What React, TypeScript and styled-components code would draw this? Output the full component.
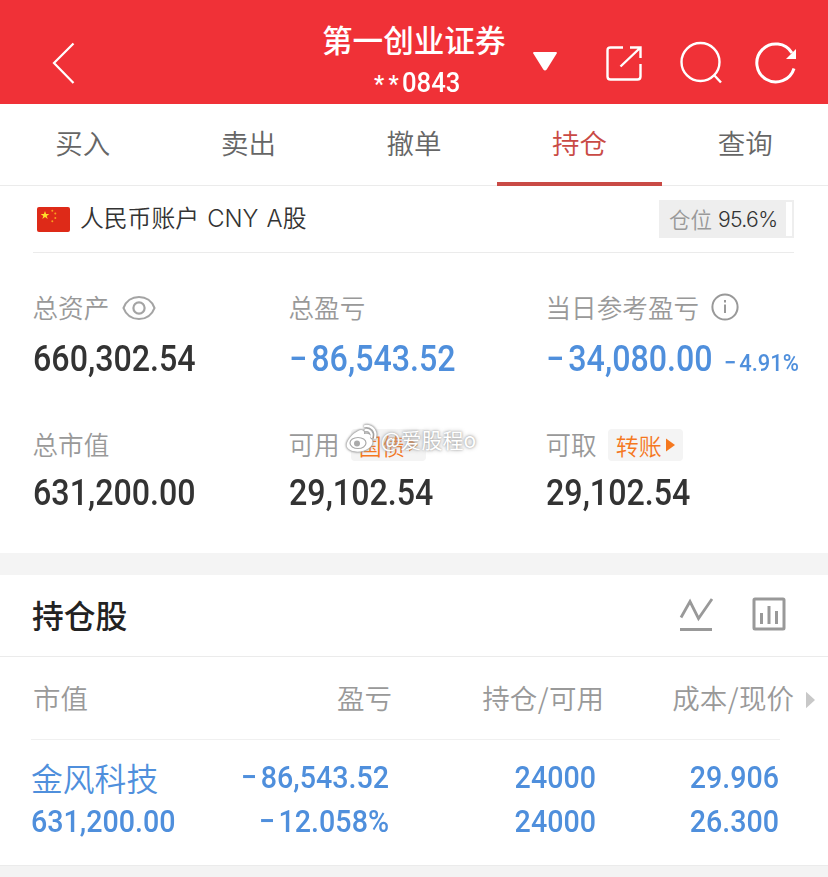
import React from "react";
import styled, { createGlobalStyle } from "styled-components";

const cjk = '"Noto Sans CJK SC", "Noto Sans", sans-serif';
const latin = 'Roboto, "Noto Sans CJK SC", sans-serif';
const blue = "#4f8fdc";
const orange = "#f5781f";

const Global = createGlobalStyle`
  * { box-sizing: border-box; }
  body { margin: 0; background: #fff; font-family: ${cjk}; }
`;

const Screen = styled.div`
  width: 828px;
  height: 877px;
  overflow: hidden;
  display: flex;
  flex-direction: column;
  background: #fff;
`;

const Header = styled.header`
  height: 104px;
  flex: none;
  display: grid;
  grid-template-columns: 322px 184px 1fr;
  background: #f03137;
  color: #fff;
`;
const HeaderLeft = styled.div`
  padding: 42px 0 0 51px;
`;
const HeaderTitle = styled.div`
  display: flex;
  flex-direction: column;
  padding-top: 18px;
  white-space: nowrap;
`;
const Broker = styled.h1`
  margin: 0;
  font-size: 30.6px;
  line-height: 42px;
  font-weight: 500;
`;
const AccountNo = styled.div`
  display: flex;
  align-items: center;
  margin: 5px 0 0 52px;
  font: 500 27px/34px ${latin};
`;
const Digits = styled.span`
  display: inline-block;
  transform: scaleX(0.95);
  transform-origin: 0 50%;
`;
const Mask = styled.span`
  width: 28px;
  font-size: 23px;
  letter-spacing: 4.4px;
  line-height: 30px;
  padding-top: 5px;
`;
const HeaderActions = styled.div`
  display: flex;
  padding: 40px 0 0 25px;
  svg { flex: none; display: block; }
`;

const Tabs = styled.nav`
  height: 82px;
  flex: none;
  display: grid;
  grid-template-columns: repeat(5, 1fr);
  border-bottom: 1px solid #ebebeb;
`;
const Tab = styled.div<{ $active?: boolean }>`
  height: 82px;
  text-align: center;
  font-size: 27.5px;
  line-height: 77px;
  font-weight: 350;
  color: ${(p) => (p.$active ? "#c94a45" : "#666")};
  border-bottom: 4px solid ${(p) => (p.$active ? "#c94a45" : "transparent")};
`;

const Account = styled.section`
  height: 67px;
  flex: none;
  margin: 0 34px 0 33px;
  border-bottom: 1px solid #ebebeb;
  display: flex;
  align-items: center;
  padding-left: 4px;
`;
const AccountName = styled.div`
  margin: 0 auto 0 10px;
  font: 350 23.8px/36px Inter, ${cjk};
  word-spacing: 1.5px;
  color: #333;
  white-space: nowrap;
`;
const Position = styled.div`
  width: 135px;
  height: 38px;
  margin-bottom: 1px;
  display: flex;
  border: 2px solid #eee;
  border-left: 0;
`;
const PositionFill = styled.div`
  width: 127px;
  background: #eee;
  padding-left: 10px;
  display: flex;
  gap: 6px;
  font-size: 21.5px;
  line-height: 33px;
  font-weight: 350;
  color: #999;
  white-space: nowrap;
  b { font: 350 21.2px/35px Inter, sans-serif; letter-spacing: -0.7px; color: #333; }
`;

const Summary = styled.section`
  height: 300px;
  flex: none;
  padding: 35px 0 0 32.500px;
  display: grid;
  grid-template-columns: 256px 257px 1fr;
  grid-template-rows: 137px 1fr;
`;
const Stat = styled.div`
  white-space: nowrap;
`;
const Label = styled.div`
  height: 38px;
  display: flex;
  align-items: center;
  font-size: 25.6px;
  line-height: 36px;
  font-weight: 350;
  color: #999;
`;
const IconGap = styled.span<{ $x: number; $y?: number }>`
  display: flex;
  margin: ${(p) => p.$y ?? 0}px 0 0 ${(p) => p.$x}px;
`;
const Values = styled.div<{ $lower?: boolean }>`
  display: flex;
  align-items: baseline;
  margin-top: ${(p) => (p.$lower ? 8 : 11)}px;
`;
const Num = styled.span<{ $size: number; $w: number; $blue?: boolean }>`
  display: block;
  width: ${(p) => p.$w}px;
  font: 500 ${(p) => p.$size}px/44px ${latin};
  color: ${(p) => (p.$blue ? blue : "#333")};
  transform: scaleX(0.895);
  transform-origin: 0 50%;
  white-space: nowrap;
`;
const Minus = styled.span`
  margin-right: 0.13em;
`;
const Chip = styled.span`
  position: relative;
  width: 75px;
  height: 32px;
  margin-left: 11px;
  margin-top: 1px;
  padding-left: 8px;
  border-radius: 4px;
  background: #f4f4f4;
  color: ${orange};
  font-size: 23px;
  line-height: 30px;
  font-weight: 350;
  display: flex;
  align-items: center;
  gap: 4px;
`;
const Watermark = styled.span`
  position: absolute;
  left: -6px;
  top: -6px;
  display: flex;
  align-items: center;
  gap: 2px;
  color: #fff;
  font-size: 21px;
  line-height: 32px;
  font-weight: 400;
  text-shadow: 0 0 2px #999, 0 0 4px #aaa;
  svg { filter: drop-shadow(0 0 1px #888) drop-shadow(0 0 1px #aaa); }
`;

const Divider = styled.div`
  height: 22px;
  flex: none;
  background: #f4f4f4;
`;
const Holdings = styled.section`
  flex: none;
  height: 290px;
`;
const HoldingsHead = styled.div`
  height: 82px;
  border-bottom: 1px solid #ebebeb;
  display: flex;
  align-items: center;
  padding: 0 42px 3px 32px;
  h2 { margin: 0 auto 0 0; font-size: 31.8px; line-height: 44px; font-weight: 500; color: #222; }
  svg { margin-left: 36px; }
`;
const Columns = styled.div`
  display: grid;
  grid-template-columns: 157px 202px 212px 190px 1fr;
  height: 82px;
  margin-left: 33px;
  padding-bottom: 2px;
  align-items: center;
  font-size: 27.5px;
  line-height: 40px;
  font-weight: 350;
  color: #999;
  white-space: nowrap;
  text-align: right;
  span:first-child { text-align: left; }
  svg { margin-left: 12px; margin-top: 6px; }
`;
const Slash = styled.i`
  font-style: normal;
  margin: 0 0.5px;
`;
const Holding = styled.div`
  height: 126px;
  margin: 0 48px 0 31px;
  border-top: 1px solid #f0f0f0;
  padding-top: 15px;
  display: grid;
  grid-template-columns: 157px 201px 207px 183px;
  grid-template-rows: 44px 44px;
`;
const Stock = styled.div`
  font-size: 31.8px;
  line-height: 44px;
  font-weight: 350;
  color: ${blue};
  white-space: nowrap;
`;
const Cell = styled.div<{ $left?: boolean }>`
  font: 500 32px/44px ${latin};
  color: ${blue};
  text-align: ${(p) => (p.$left ? "left" : "right")};
  transform: scaleX(0.895);
  transform-origin: ${(p) => (p.$left ? "0" : "100%")} 50%;
  white-space: nowrap;
`;
const Footer = styled.div`
  flex: 1;
  background: #f3f3f3;
  border-top: 1px solid #ebebeb;
`;

const Back = () => (
  <svg width="26" height="44" fill="none" stroke="#fff" strokeWidth="2.2">
    <path d="M22.5 1.5 3 21 22.5 41" />
  </svg>
);
const Flag = () => (
  <svg width="33" height="25" viewBox="0 0 33 25">
    <rect width="33" height="25" rx="2" fill="#de2a18" />
    <path fill="#ffde2a" d="m8 4 1.1 3h3.2L9.7 8.9l1 3.1L8 10.1 5.3 12l1-3.1L3.7 7h3.2z" />
    <g fill="#f8a01e">
      <circle cx="15.3" cy="3.8" r="1" />
      <circle cx="18.3" cy="6.6" r="1" />
      <circle cx="18.3" cy="11" r="1" />
      <circle cx="15.3" cy="14.3" r="1" />
    </g>
  </svg>
);
const Eye = () => (
  <svg width="34" height="26" fill="none" stroke="#a4a4a4" strokeWidth="2.2">
    <path d="M1.5 13C4 6 10 2 17 2s13 4 15.500 11C30 20 24 24 17 24S4 20 1.500 13Z" />
    <circle cx="17" cy="13" r="5.600" />
  </svg>
);
const Info = () => (
  <svg width="28" height="28" fill="none" stroke="#999" strokeWidth="2">
    <circle cx="14" cy="14" r="12.6" />
    <path d="M14 11.500V20M14 7v2.500" />
  </svg>
);
const Play = ({ c, w, h }: { c: string; w: number; h: number }) => (
  <svg width={w} height={h} viewBox="0 0 9 14" preserveAspectRatio="none">
    <path d="M0 0.5 9 7 0 13.5z" fill={c} />
  </svg>
);
const Weibo = () => (
  <svg width="34" height="30" viewBox="0 0 34 30">
    <path d="M13 7c3-2 7-1 6 3 5-1 8 1 6 4 4 2 3 7-1 10-6 5-19 5-22-1-2-5 5-13 11-16Z" fill="#fff" />
    <ellipse cx="13" cy="19" rx="8" ry="5.500" fill="none" stroke="#aaa" strokeWidth="1.200" />
    <circle cx="12" cy="19.500" r="3" fill="#aaa" />
    <path d="M20 2c7-1 12 5 10 12M20.500 6c4-.5 7 3 6 7" fill="none" stroke="#fff" strokeWidth="2.200" strokeLinecap="round" />
  </svg>
);

export default function App() {
  return (
    <Screen>
      <Global />
      <Header>
        <HeaderLeft><Back /></HeaderLeft>
        <HeaderTitle>
          <Broker>第一创业证券</Broker>
          <AccountNo><Mask>**</Mask><Digits>0843</Digits></AccountNo>
        </HeaderTitle>
        <HeaderActions>
          <svg width="74" height="48" fill="#fff">
            <path d="M3 12h22q1.500 0 .7 1.500l-10 16q-1.700 2-3.400 0l-10-16Q1.500 12 3 12Z" />
          </svg>
          <svg width="74" height="48" fill="none" stroke="#fff" strokeWidth="2.4">
            <path d="M18 7.500H5.500q-3 0-3 3v26q0 3 3 3h27q3 0 3-3V24M15.500 26.500 35 8M25 7.500h10.500V18" />
          </svg>
          <svg width="74" height="48" fill="none" stroke="#fff" strokeWidth="2.4">
            <circle cx="21.500" cy="22" r="19" />
            <path d="m35 35 7 7.500" />
          </svg>
          <svg width="50" height="48" fill="none" stroke="#fff" strokeWidth="3">
            <path d="M41 28.500A19 19 0 1 1 39 13" />
            <path d="M43 9v10h-10z" fill="#fff" stroke="none" />
          </svg>
        </HeaderActions>
      </Header>
      <Tabs>
        <Tab>买入</Tab>
        <Tab>卖出</Tab>
        <Tab>撤单</Tab>
        <Tab $active>持仓</Tab>
        <Tab>查询</Tab>
      </Tabs>
      <Account>
        <Flag />
        <AccountName>人民币账户 CNY A股</AccountName>
        <Position><PositionFill>仓位<b>95.6%</b></PositionFill></Position>
      </Account>
      <Summary>
        <Stat>
          <Label>总资产<IconGap $x={13} $y={2}><Eye /></IconGap></Label>
          <Values><Num $size={36} $w={170}>660,302.54</Num></Values>
        </Stat>
        <Stat>
          <Label>总盈亏</Label>
          <Values><Num $size={36} $w={170} $blue><Minus>−</Minus>86,543.52</Num></Values>
        </Stat>
        <Stat>
          <Label>当日参考盈亏<IconGap $x={12}><Info /></IconGap></Label>
          <Values>
            <Num $size={36} $w={178} $blue><Minus>−</Minus>34,080.00</Num>
            <Num $size={24.5} $w={76} $blue><Minus>−</Minus>4.91%</Num>
          </Values>
        </Stat>
        <Stat>
          <Label>总市值</Label>
          <Values $lower><Num $size={36} $w={170}>631,200.00</Num></Values>
        </Stat>
        <Stat>
          <Label>
            可用
            <Chip>
              国债<Play c={orange} w={9} h={14} />
              <Watermark><Weibo />@爱股程o</Watermark>
            </Chip>
          </Label>
          <Values $lower><Num $size={36} $w={170}>29,102.54</Num></Values>
        </Stat>
        <Stat>
          <Label>可取<Chip>转账<Play c={orange} w={9} h={14} /></Chip></Label>
          <Values $lower><Num $size={36} $w={170}>29,102.54</Num></Values>
        </Stat>
      </Summary>
      <Divider />
      <Holdings>
        <HoldingsHead>
          <h2>持仓股</h2>
          <svg width="38" height="34" fill="none" stroke="#999" strokeWidth="2.8">
            <path d="M3 20.5 12 4.500l8.500 17L34 2" />
            <path d="M2 32.500h32" strokeWidth="3" />
          </svg>
          <svg width="34" height="34" fill="none" stroke="#999" strokeWidth="3">
            <rect x="2" y="2" width="30" height="30" rx="1" />
            <path d="M9.500 16v11M17 9v18M24.500 14v13" />
          </svg>
        </HoldingsHead>
        <Columns>
          <span>市值</span>
          <span>盈亏</span>
          <span>持仓<Slash>/</Slash>可用</span>
          <span>成本<Slash>/</Slash>现价</span>
          <Play c="#c8c8c8" w={9} h={18} />
        </Columns>
        <Holding>
          <Stock>金风科技</Stock>
          <Cell><Minus>−</Minus>86,543.52</Cell>
          <Cell>24000</Cell>
          <Cell>29.906</Cell>
          <Cell $left>631,200.00</Cell>
          <Cell><Minus>−</Minus>12.058%</Cell>
          <Cell>24000</Cell>
          <Cell>26.300</Cell>
        </Holding>
      </Holdings>
      <Footer />
    </Screen>
  );
}
